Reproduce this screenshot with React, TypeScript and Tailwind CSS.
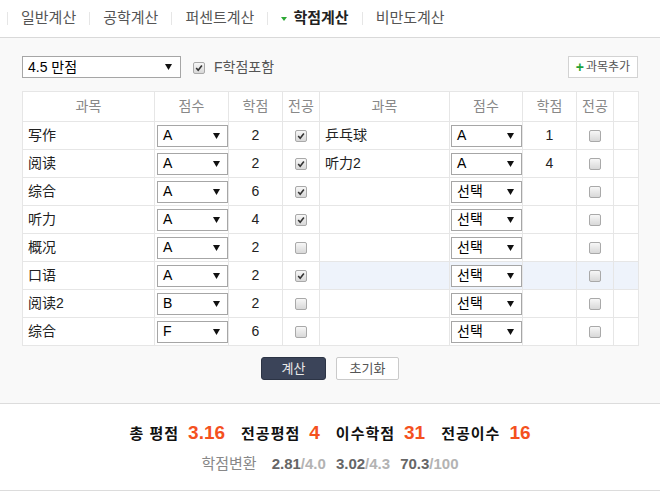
import clsx from 'clsx'

const tabs = ['일반계산', '공학계산', '퍼센트계산', '학점계산', '비만도계산']

const left = [
  { name: '写作', grade: 'A', credit: '2', major: true },
  { name: '阅读', grade: 'A', credit: '2', major: true },
  { name: '综合', grade: 'A', credit: '6', major: true },
  { name: '听力', grade: 'A', credit: '4', major: true },
  { name: '概况', grade: 'A', credit: '2', major: false },
  { name: '口语', grade: 'A', credit: '2', major: true },
  { name: '阅读2', grade: 'B', credit: '2', major: false },
  { name: '综合', grade: 'F', credit: '6', major: false }
]

const right = [
  { name: '乒乓球', grade: 'A', credit: '1', major: false },
  { name: '听力2', grade: 'A', credit: '4', major: false },
  ...Array.from({ length: 6 }, () => ({ name: '', grade: '선택', credit: '', major: false }))
]

function Arrow() {
  return (
    <svg viewBox="0 0 7 6" className="h-[6px] w-[7px] shrink-0">
      <path d="M0 0 H7 L3.5 6 Z" fill="#111" />
    </svg>
  )
}

function Check({ on }: { on?: boolean }) {
  return (
    <span className="inline-flex h-[12px] w-[12px] items-center justify-center rounded-[2px] border border-[#a9a9a9] bg-linear-to-b from-[#f7f7f7] to-[#d8d8d8] align-middle">
      {on && (
        <svg viewBox="0 0 10 10" className="h-[8px] w-[8px]">
          <path d="M1.5 5 L4 7.8 L8.6 2" stroke="#333" strokeWidth="2" fill="none" />
        </svg>
      )}
    </span>
  )
}

function Sel({ value }: { value: string }) {
  return (
    <div className="flex h-[22px] w-[71px] items-center justify-between border border-[#a6a6a6] bg-white pl-[5px] pr-[7px] text-[14px] text-black">
      <span>{value}</span>
      <Arrow />
    </div>
  )
}

const th = 'border border-[#e6e6e6] h-[30px] text-[14px] font-normal text-[#888]'
const td = 'border border-[#e6e6e6] h-[28px] p-0'

export default function App() {
  return (
    <div className="min-h-[491px] w-[660px] bg-white font-['Liberation_Sans','Noto_Sans_CJK_KR',sans-serif] text-[#333]">
      <div className="flex h-[38px] items-center border-b border-[#d9d9d9] pl-[7px]">
        {tabs.map((t, i) => (
          <div key={t} className="flex items-center">
            <span className="h-[13px] w-px bg-[#e6e6e6]" />
            <span
              className={clsx(
                'flex items-center px-[13px] text-[15px]',
                t === '학점계산' ? 'font-bold text-[#222]' : 'text-[#555]',
                i === 0 && 'pl-[13px]'
              )}
            >
              {t === '학점계산' && (
                <svg viewBox="0 0 6 4" className="mr-[6px] h-[4px] w-[6px]">
                  <path d="M0 0 H6 L3 4 Z" fill="#2ea836" />
                </svg>
              )}
              {t}
            </span>
          </div>
        ))}
      </div>

      <div className="bg-[#f9f9f9] px-[22px] pt-[18px] pb-[23px]">
        <div className="flex h-[22px] items-center">
          <div className="flex h-[22px] w-[159px] items-center justify-between border border-[#a6a6a6] bg-white pl-[5px] pr-[8px] text-[14px] text-black">
            <span>4.5 만점</span>
            <Arrow />
          </div>
          <span className="ml-[12px]">
            <Check on />
          </span>
          <span className="ml-[9px] text-[14px] text-[#555]">F학점포함</span>
          <button className="ml-auto flex h-[22px] w-[70px] items-center justify-center border border-[#d3d3d3] bg-white text-[12px] text-[#555]">
            <span className="mr-[2px] text-[14px] font-bold leading-none text-[#1fa33a]">+</span>
            과목추가
          </button>
        </div>

        <table className="mt-[13px] w-[616px] table-fixed border-collapse bg-white">
          <colgroup>
            <col className="w-[132px]" />
            <col className="w-[74px]" />
            <col className="w-[54px]" />
            <col className="w-[37px]" />
            <col className="w-[130px]" />
            <col className="w-[73px]" />
            <col className="w-[54px]" />
            <col className="w-[37px]" />
            <col className="w-[25px]" />
          </colgroup>
          <thead>
            <tr>
              <th className={th}>과목</th>
              <th className={th}>점수</th>
              <th className={th}>학점</th>
              <th className={th}>전공</th>
              <th className={th}>과목</th>
              <th className={th}>점수</th>
              <th className={th}>학점</th>
              <th className={th}>전공</th>
              <th className={th}></th>
            </tr>
          </thead>
          <tbody>
            {left.map((l, i) => {
              const r = right[i]
              const hl = i === 5 ? 'bg-[#eef3fb]' : ''
              return (
                <tr key={i} className="text-[14px] text-[#222]">
                  <td className={clsx(td, 'pl-[5px]')}>{l.name}</td>
                  <td className={clsx(td, 'pl-[2px]')}>
                    <Sel value={l.grade} />
                  </td>
                  <td className={clsx(td, 'text-center')}>{l.credit}</td>
                  <td className={clsx(td, 'text-center')}>
                    <Check on={l.major} />
                  </td>
                  <td className={clsx(td, hl, 'pl-[5px]')}>{r.name}</td>
                  <td className={clsx(td, hl, 'pl-[1px]')}>
                    <Sel value={r.grade} />
                  </td>
                  <td className={clsx(td, hl, 'text-center')}>{r.credit}</td>
                  <td className={clsx(td, hl, 'text-center')}>
                    <Check on={r.major} />
                  </td>
                  <td className={clsx(td, hl)}></td>
                </tr>
              )
            })}
          </tbody>
        </table>

        <div className="mt-[11px] flex justify-center gap-[10px]">
          <button className="h-[23px] w-[65px] rounded-[3px] border border-[#2c3445] bg-[#3b4459] text-[13px] text-[#e8e8e8]">
            계산
          </button>
          <button className="h-[23px] w-[63px] rounded-[2px] border border-[#cacaca] bg-white text-[13px] text-[#555]">
            초기화
          </button>
        </div>
      </div>

      <div className="flex h-[88px] flex-col items-center justify-center border-y border-[#dcdcdc] bg-white">
        <div className="flex items-baseline text-[15px] font-bold tracking-[1px] text-[#111]">
          <span>총 평점</span>
          <span className="ml-[9px] text-[19px] tracking-normal text-[#f4511e]">3.16</span>
          <span className="ml-[16px]">전공평점</span>
          <span className="ml-[9px] text-[19px] tracking-normal text-[#f4511e]">4</span>
          <span className="ml-[16px]">이수학점</span>
          <span className="ml-[9px] text-[19px] tracking-normal text-[#f4511e]">31</span>
          <span className="ml-[16px]">전공이수</span>
          <span className="ml-[9px] text-[19px] tracking-normal text-[#f4511e]">16</span>
        </div>
        <div className="mt-[5px] flex items-baseline text-[14px]">
          <span className="text-[15px] text-[#888]">학점변환</span>
          <span className="ml-[15px] text-[15px] font-bold text-[#666]">2.81</span>
          <span className="text-[15px] font-bold text-[#b3b3b3]">/4.0</span>
          <span className="ml-[10px] text-[15px] font-bold text-[#666]">3.02</span>
          <span className="text-[15px] font-bold text-[#b3b3b3]">/4.3</span>
          <span className="ml-[10px] text-[15px] font-bold text-[#666]">70.3</span>
          <span className="text-[15px] font-bold text-[#b3b3b3]">/100</span>
        </div>
      </div>
    </div>
  )
}
